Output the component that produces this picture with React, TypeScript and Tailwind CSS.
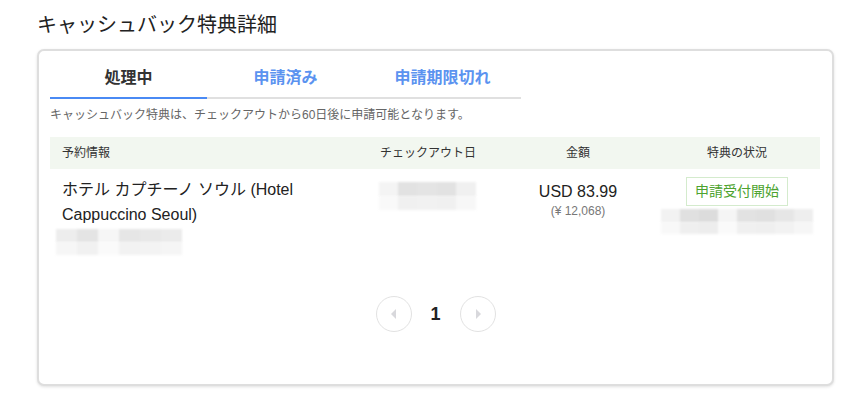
const jp = { fontFamily: '"Liberation Sans", "Noto Sans CJK JP", sans-serif' };

function Blurred({ cells, className }: { cells: string[]; className: string }) {
  return (
    <div className={`flex flex-col ${className}`}>
      <div className="flex h-1/2 blur-[1px]">
        {cells.map((c, i) => (
          <div key={i} className="flex-1" style={{ background: c }} />
        ))}
      </div>
      <div className="flex h-1/2 blur-[1px]">
        {cells.map((c, i) => (
          <div key={i} className="flex-1 opacity-50" style={{ background: c }} />
        ))}
      </div>
    </div>
  );
}

function Tab({ label, active }: { label: string; active?: boolean }) {
  return (
    <div
      className={`flex h-[40px] w-[157px] items-center justify-center border-b-2 text-[16px] font-bold ${
        active ? 'border-[#4a8af4] text-[#333]' : 'border-[#e0e0e0] text-[#5b93f0]'
      }`}
    >
      {label}
    </div>
  );
}

function PageButton({ dir }: { dir: 'prev' | 'next' }) {
  return (
    <div className="flex h-[36px] w-[36px] items-center justify-center rounded-full border border-[#e2e2e2]">
      <svg width="6" height="10" viewBox="0 0 6 10">
        {dir === 'prev' ? <path d="M5 0 L0 5 L5 10 Z" fill="#d8d8dc" /> : <path d="M1 0 L6 5 L1 10 Z" fill="#d8d8dc" />}
      </svg>
    </div>
  );
}

export default function App() {
  return (
    <div className="h-[405px] w-[868px] bg-white pl-[37px] pt-[12px]" style={jp}>
      <h1 className="text-[20px] leading-[26px] text-[#222]">キャッシュバック特典詳細</h1>
      <div className="mt-[11px] h-[337px] w-[797px] rounded-[7px] border-2 border-[#dedede] bg-white pl-[11px] pr-[11px] pt-[8px] shadow-[0_1px_3px_rgba(0,0,0,0.12)]">
        <div className="flex">
          <Tab label="処理中" active />
          <Tab label="申請済み" />
          <Tab label="申請期限切れ" />
        </div>
        <p className="mt-[8px] text-[12px] leading-[16px] text-[#666]">
          キャッシュバック特典は、チェックアウトから60日後に申請可能となります。
        </p>
        <div className="mt-[14px] w-[770px]">
          <div className="grid h-[32px] grid-cols-[313px_130px_170px_148px] items-center bg-[#f2f7f0] pr-[9px] text-[12px] text-[#333]">
            <div className="pl-[12px]">予約情報</div>
            <div className="text-center">チェックアウト日</div>
            <div className="text-center">金額</div>
            <div className="text-center">特典の状況</div>
          </div>
          <div className="grid grid-cols-[313px_130px_170px_148px] pr-[9px]">
            <div className="pt-[8px]">
              <div className="pl-[12px] pr-[10px] text-[16px] leading-[25px] text-[#222]">
                ホテル カプチーノ ソウル (Hotel Cappuccino Seoul)
              </div>
              <Blurred
                className="ml-[6px] mt-[2px] h-[26px] w-[126px]"
                cells={['#ededed', '#e4e4e4', '#f6f6f6', '#e6e6e6', '#e8e8e8', '#ebebeb']}
              />
            </div>
            <div className="flex justify-center pt-[13px]">
              <Blurred className="ml-[-2px] h-[28px] w-[97px]" cells={['#f4f4f4', '#e2e2e2', '#e4e4e4', '#e2e2e2', '#f0f0f0']} />
            </div>
            <div className="flex flex-col items-center pt-[12px]">
              <div className="text-[16px] leading-[22px] text-[#222]">USD 83.99</div>
              <div className="text-[12px] leading-[16px] text-[#777]">(¥ 12,068)</div>
            </div>
            <div className="flex flex-col items-center pt-[8px]">
              <div className="flex h-[29px] w-[102px] items-center justify-center border border-[#d4ebcd] text-[14px] text-[#4da32f]">
                申請受付開始
              </div>
              <Blurred
                className="mt-[3px] h-[25px] w-[152px]"
                cells={['#f2f2f2', '#e0e0e0', '#dcdcdc', '#f5f5f5', '#e2e2e2', '#e0e0e0', '#e6e6e6', '#eeeeee']}
              />
            </div>
          </div>
        </div>
        <div className="mt-[41px] flex items-center justify-center">
          <PageButton dir="prev" />
          <div className="w-[48px] text-center text-[18px] font-bold text-[#222]">1</div>
          <PageButton dir="next" />
        </div>
      </div>
    </div>
  );
}
